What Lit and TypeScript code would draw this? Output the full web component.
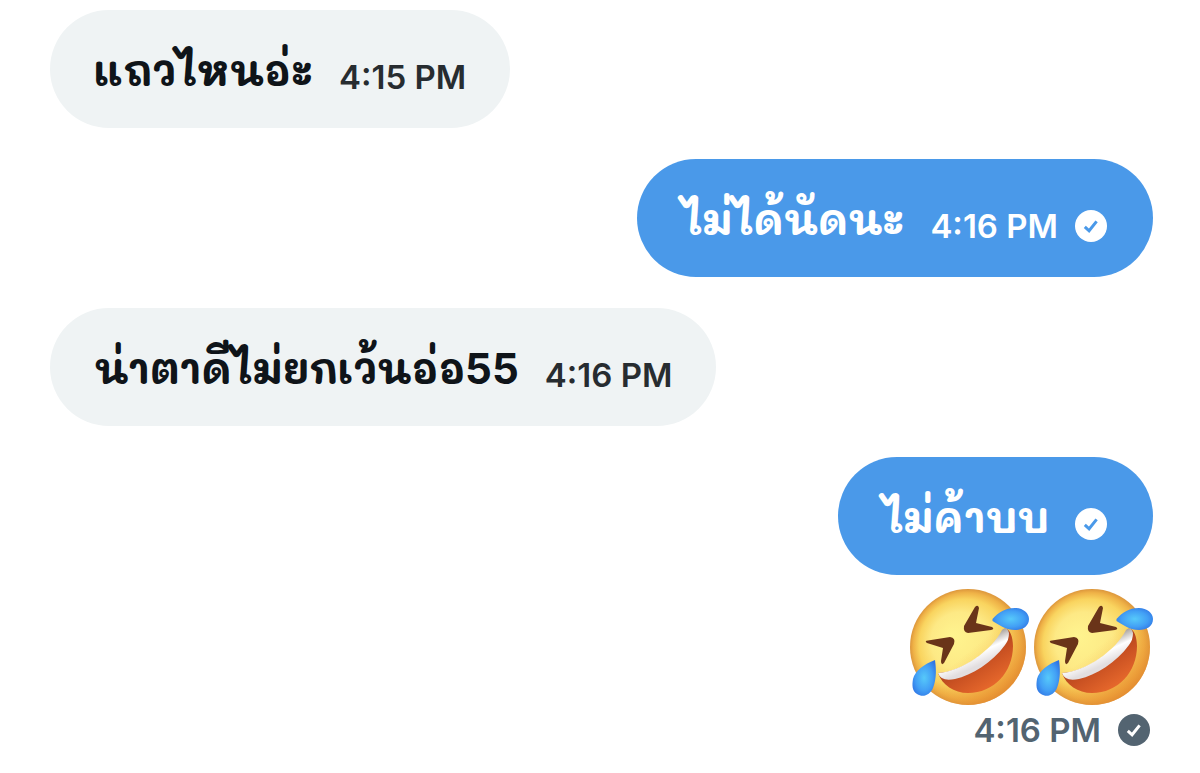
import { LitElement, html, css, nothing } from "lit";
import { customElement, property } from "lit/decorators.js";

@customElement("sent-check")
class SentCheck extends LitElement {
  static styles = css`
    :host {
      display: block;
      width: 32px;
      height: 32px;
    }
    .icon {
      display: block;
      width: 100%;
      height: 100%;
    }
    .disc {
      fill: currentColor;
    }
    .tick {
      fill: none;
      stroke: var(--tick-color, #fff);
      stroke-width: 3;
      stroke-linejoin: miter;
    }
  `;
  render() {
    return html`<svg class="icon" viewBox="0 0 32 32" role="img" aria-label="Sent">
      <circle class="disc" cx="16" cy="16" r="16" />
      <path class="tick" d="M9.8 16.8 L14.1 20.8 L21.6 11.4" />
    </svg>`;
  }
}

@customElement("message-time")
class MessageTime extends LitElement {
  @property() value = "";
  static styles = css`
    :host {
      display: block;
      font: 600 33px/44px Inter, "Liberation Sans", sans-serif;
      white-space: nowrap;
    }
  `;
  render() {
    return html`<time>${this.value}</time>`;
  }
}

@customElement("message-bubble")
class MessageBubble extends LitElement {
  @property() text = "";
  @property() time = "";
  @property({ type: Boolean, reflect: true }) own = false;
  static styles = css`
    :host {
      display: flex;
    }
    :host([own]) {
      justify-content: flex-end;
      --tick-color: #4a99e9;
    }
    .bubble {
      display: flex;
      align-items: flex-end;
      gap: 26px;
      padding: 33px 44px 29px;
      border-radius: 59px;
      background: #eff3f4;
      color: #0f1419;
    }
    :host([own]) .bubble {
      background: #4a99e9;
      color: #fff;
      padding-right: 46px;
    }
    .text {
      margin: 0;
      font: 700 42px/56px Inter, Mali, "Noto Sans Thai", sans-serif;
      white-space: nowrap;
    }
    .meta {
      display: flex;
      align-items: center;
      gap: 17px;
      min-height: 44px;
      color: #272c30;
    }
    :host([own]) .meta {
      color: #fff;
    }
  `;
  render() {
    return html`<div class="bubble">
      <p class="text" lang="th">${this.text}</p>
      <div class="meta">
        ${this.time ? html`<message-time .value=${this.time}></message-time>` : nothing}
        ${this.own ? html`<sent-check></sent-check>` : nothing}
      </div>
    </div>`;
  }
}

@customElement("rofl-emoji")
class RoflEmoji extends LitElement {
  static styles = css`
    :host {
      display: block;
      width: 124px;
      height: 120px;
    }
    .face {
      display: block;
      width: 100%;
      height: 100%;
    }
  `;
  render() {
    return html`<svg class="face" viewBox="-3 0 124 120" role="img" aria-label="Rolling on the floor laughing">
      <defs>
        <radialGradient id="skin" cx="0.5" cy="0.5" r="0.5" fx="0.36" fy="0.4">
          <stop offset="0" stop-color="#fff48f" />
          <stop offset="0.5" stop-color="#fde985" />
          <stop offset="0.78" stop-color="#f9d45f" />
          <stop offset="0.92" stop-color="#efb247" />
          <stop offset="1" stop-color="#dc963c" />
        </radialGradient>
        <linearGradient id="shade" x1="0.3" y1="0.3" x2="0.8" y2="0.9">
          <stop offset="0.4" stop-color="#f0a038" stop-opacity="0" />
          <stop offset="1" stop-color="#e88a2c" stop-opacity="0.7" />
        </linearGradient>
        <linearGradient id="mouth" x1="0.3" y1="0.3" x2="0.75" y2="0.9">
          <stop offset="0" stop-color="#9c3d1c" />
          <stop offset="0.5" stop-color="#c95122" />
          <stop offset="1" stop-color="#e8692c" />
        </linearGradient>
        <linearGradient id="teeth" x1="0.38" y1="0.35" x2="0.6" y2="0.7">
          <stop offset="0" stop-color="#aaa39e" />
          <stop offset="0.5" stop-color="#ffffff" />
          <stop offset="1" stop-color="#e2dedf" />
        </linearGradient>
        <radialGradient id="tear" cx="0.5" cy="0.5" r="0.6">
          <stop offset="0" stop-color="#56c9fa" />
          <stop offset="0.6" stop-color="#429ff5" />
          <stop offset="1" stop-color="#2f74e4" />
        </radialGradient>
      </defs>
      <circle cx="60" cy="59" r="58" fill="url(#skin)" />
      <circle cx="60" cy="59" r="58" fill="url(#shade)" />
      <path d="M30 85 C55 84 86 61 96 41 C101 39 105 48 105 58 C105 84 86 105 60 105 C46 105 34 97 30 85 Z" fill="url(#mouth)" />
      <path d="M30 85 C55 83 84 62 94 42 Q99 38 101 45 Q101 52 97 57 C84 75 64 87 47 91 Q33 94 30 85 Z" fill="url(#teeth)" />
      <path d="M67 19 Q70 16 71 20 L68 35 L84 39 Q87 41 83 42 L60 45 Q55 44 56 38 Z" fill="#6a3419" />
      <path d="M19 55 Q16 53 20 52.500 L42 49 Q48 50 46 56 L36 75 Q33 78 33 73 L35 60 Z" fill="#6a3419" />
      <path d="M84.500 31 C91 24 97 20 107 20 C115 20 121 25 121 31 C121 38 115 42 107 42 C98 42 91 37 84.500 33 Z" fill="url(#tear)" />
      <path d="M27 72 C28 80 29 90 25 100 C22 107 15 110 9 106 C4 103 4 97 5 91 C7 83 16 76 27 72 Z" fill="url(#tear)" />
    </svg>`;
  }
}

@customElement("app-root")
class AppRoot extends LitElement {
  static styles = css`
    :host {
      display: block;
      min-height: 100vh;
      box-sizing: border-box;
      padding: 10px 47px 20px 50px;
      background: #fff;
    }
    .thread {
      display: flex;
      flex-direction: column;
      gap: 31px;
    }
    .latest {
      display: flex;
      flex-direction: column;
      gap: 13px;
    }
    .emoji-message {
      display: flex;
      flex-direction: column;
      align-items: flex-end;
    }
    .emojis {
      display: flex;
    }
    .stamp {
      display: flex;
      align-items: center;
      gap: 17px;
      padding-right: 3px;
      color: #536471;
    }
  `;
  render() {
    return html`<main class="thread">
      <message-bubble text="แถวไหนอ่ะ" time="4:15 PM"></message-bubble>
      <message-bubble own text="ไม่ได้นัดนะ" time="4:16 PM"></message-bubble>
      <message-bubble text="น่าตาดีไม่ยกเว้นอ่อ55" time="4:16 PM"></message-bubble>
      <div class="latest">
        <message-bubble own text="ไม่ค้าบบ"></message-bubble>
        <div class="emoji-message">
          <div class="emojis">
            <rofl-emoji></rofl-emoji>
            <rofl-emoji></rofl-emoji>
          </div>
          <div class="stamp">
            <message-time value="4:16 PM"></message-time>
            <sent-check></sent-check>
          </div>
        </div>
      </div>
    </main>`;
  }
}
